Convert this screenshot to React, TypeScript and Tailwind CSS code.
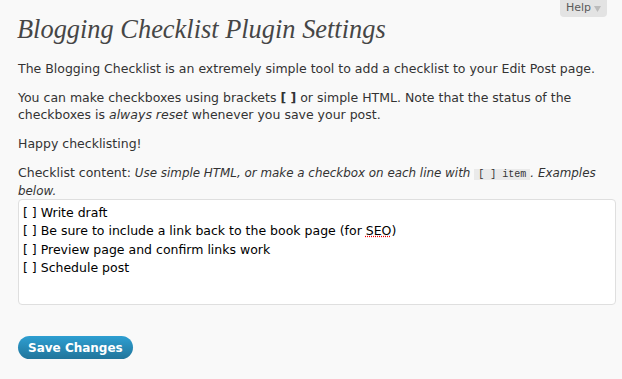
import React from "react";

export default function App() {
  const body = { fontFamily: '"DejaVu Sans", Verdana, sans-serif' };
  return (
    <div className="relative min-h-[379px] w-[622px] bg-[#f9f9f9] text-[#333]" style={body}>
      <div className="absolute right-[15px] top-0 flex h-[17px] items-center gap-[3px] rounded-b-[4px] bg-[#e3e3e3] px-[6px] text-[11px] text-[#5a5a5a]">
        <span>Help</span>
        <svg width="7" height="6" viewBox="0 0 7 6"><path d="M0 0h7L3.5 6z" fill="#bbb" /></svg>
      </div>
      <div className="px-[18px] pt-[12px]">
        <h2
          className="-ml-[1px] text-[26.4px] italic leading-[34px] text-[#464646]"
          style={{ fontFamily: '"Liberation Serif", Georgia, serif' }}
        >
          Blogging Checklist Plugin Settings
        </h2>
        <p className="mt-[14px] text-[12.5px] leading-[17px]">
          The Blogging Checklist is an extremely simple tool to add a checklist to your Edit Post page.
        </p>
        <p className="mt-[12px] text-[12.5px] leading-[17px]">
          You can make checkboxes using brackets <b>[ ]</b> or simple HTML. Note that the status of the checkboxes is{" "}
          <i>always reset</i> whenever you save your post.
        </p>
        <p className="mt-[12px] text-[12.5px] leading-[17px]">Happy checklisting!</p>
        <p className="mt-[12px] text-[12.5px] leading-[17px]">
          Checklist content:{" "}
          <i className="text-[11.9px]">Use simple HTML, or make a checkbox on each line with</i>{" "}
          <code
            className="bg-[#eaeaea] px-[4px] text-[10px] leading-[14px]"
            style={{ fontFamily: '"Liberation Mono", "Courier New", monospace' }}
          >
            [ ] item
          </code>
          <i className="text-[11.9px]">. Examples below.</i>
        </p>
        <div className="-mt-[1px] h-[106px] w-[598px] rounded-[4px] border border-[#dfdfdf] bg-white px-[4px] pt-[4px] text-[12.5px] leading-[18.3px] text-black">
          <div>[ ] Write draft</div>
          <div>
            [ ] Be sure to include a link back to the book page (for{" "}
            <span className="underline decoration-[#e00] decoration-dotted">SEO</span>)
          </div>
          <div>[ ] Preview page and confirm links work</div>
          <div>[ ] Schedule post</div>
        </div>
        <button className="mt-[31px] h-[23px] rounded-full bg-gradient-to-b from-[#2e9fd2] to-[#21759b] px-[10px] text-[12px] font-bold text-white">
          Save Changes
        </button>
      </div>
    </div>
  );
}
